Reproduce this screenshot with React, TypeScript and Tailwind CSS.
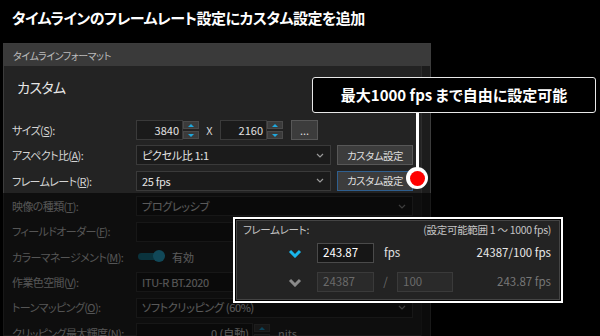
import React from "react";

const jp = "font-['Noto_Sans_CJK_JP','Noto_Sans',sans-serif] [font-feature-settings:'palt']";

const Chevron: React.FC<{ color?: string }> = ({ color = "#9a9a9a" }) => (
  <svg width="8" height="5" viewBox="0 0 8 5" fill="none">
    <polyline points="1,1 4,4 7,1" stroke={color} strokeWidth="1.2" />
  </svg>
);

const Spinner: React.FC = () => (
  <div className="flex flex-col gap-[2px] w-[16px]">
    <div className="h-[8px] bg-[#3b3b3b] border border-[#4a4a4a] flex items-center justify-center">
      <div className="w-0 h-0 border-l-[3px] border-r-[3px] border-b-[3px] border-l-transparent border-r-transparent border-b-[#1fa8dd]" />
    </div>
    <div className="h-[8px] bg-[#3b3b3b] border border-[#4a4a4a] flex items-center justify-center">
      <div className="w-0 h-0 border-l-[3px] border-r-[3px] border-t-[3px] border-l-transparent border-r-transparent border-t-[#1fa8dd]" />
    </div>
  </div>
);

const Label: React.FC<{ text: string; k: string }> = ({ text, k }) => (
  <div className="w-[124px] shrink-0 whitespace-nowrap text-[11px] tracking-[-0.6px] text-[#d4d4d4]">
    {text}(<span className="underline">{k}</span>):
  </div>
);

const Select: React.FC<{ value: string; w: string }> = ({ value, w }) => (
  <div className={`${w} h-[20px] bg-[#1b1b1b] border border-[#3a3a3a] flex items-center justify-between pl-[5px] pr-[6px] whitespace-nowrap text-[11px] tracking-[-0.3px] text-[#e2e2e2]`}>
    <span>{value}</span>
    <Chevron />
  </div>
);

const Button: React.FC<{ label: string; focused?: boolean }> = ({ label, focused }) => (
  <div
    className={`ml-[6px] w-[76px] h-[20px] flex items-center justify-center text-[10.5px] tracking-[-0.5px] text-[#dcdcdc] bg-[#3c3c3c] border ${
      focused ? "border-[#2f5f8f]" : "border-[#575757]"
    }`}
  >
    {label}
  </div>
);

const FrameChevron: React.FC<{ color: string }> = ({ color }) => (
  <svg width="14" height="9" viewBox="0 0 14 9" fill="none">
    <polyline points="2,2 7,7 12,2" stroke={color} strokeWidth="3" />
  </svg>
);

export default function App() {
  return (
    <div className={`relative w-[600px] h-[336px] overflow-hidden bg-black ${jp}`}>
      <div className="h-[43px] pl-[12px] pt-[7px] text-[15px] tracking-[-0.5px] font-bold text-white whitespace-nowrap">
        タイムラインのフレームレート設定にカスタム設定を追加
      </div>

      <div className="ml-[3px] w-[428px] h-[293px] border border-[#3c3c3c] bg-[#232323] flex flex-col">
        <div className="h-[22px] shrink-0 bg-[#3a3a3a] pl-[9px] flex items-center text-[10px] tracking-[-0.4px] text-[#bcbcbc]">
          タイムラインフォーマット
        </div>
        <div className="flex flex-1">
          <div className="flex-1 flex flex-col pl-[8px]">
            <div className="h-[30px] mt-[6px] pl-[5px] flex items-center text-[14px] tracking-[-0.6px] text-[#e6e6e6]">カスタム</div>
            <div className="flex flex-col gap-[5.4px] mt-[18px]">
              <div className="h-[20px] flex items-center">
                <Label text="サイズ" k="S" />
                <div className="w-[47px] h-[20px] bg-[#1b1b1b] border border-[#3a3a3a] flex items-center justify-end pr-[3px] text-[11px] text-[#e2e2e2]">3840</div>
                <Spinner />
                <span className="w-[21px] text-center text-[11px] text-[#d4d4d4]">X</span>
                <div className="w-[47px] h-[20px] bg-[#1b1b1b] border border-[#3a3a3a] flex items-center justify-end pr-[3px] text-[11px] text-[#e2e2e2]">2160</div>
                <Spinner />
                <div className="ml-[8px] w-[27px] h-[20px] bg-[#3c3c3c] border border-[#575757] flex items-center justify-center text-[11px] text-[#dcdcdc]">...</div>
              </div>
              <div className="h-[20px] flex items-center">
                <Label text="アスペクト比" k="A" />
                <Select value="ピクセル比 1:1" w="w-[195px]" />
                <Button label="カスタム設定" />
              </div>
              <div className="h-[20px] flex items-center">
                <Label text="フレームレート" k="R" />
                <Select value="25 fps" w="w-[195px]" />
                <Button label="カスタム設定" focused />
              </div>
              <div className="h-[20px] flex items-center">
                <Label text="映像の種類" k="T" />
                <Select value="プログレッシブ" w="w-[277px]" />
              </div>
              <div className="h-[20px] flex items-center">
                <Label text="フィールドオーダー" k="F" />
                <Select value="" w="w-[277px]" />
              </div>
              <div className="h-[20px] flex items-center">
                <Label text="カラーマネージメント" k="M" />
                <div className="relative w-[24px] h-[7px] ml-[2px] rounded-full bg-[#1a7f99]">
                  <div className="absolute right-[-3px] top-[-3px] w-[12px] h-[12px] rounded-full bg-[#2bb5dc]" />
                </div>
                <span className="ml-[10px] text-[11px] text-[#e2e2e2]">有効</span>
              </div>
              <div className="h-[20px] flex items-center">
                <Label text="作業色空間" k="V" />
                <Select value="ITU-R BT.2020" w="w-[277px]" />
              </div>
              <div className="h-[20px] flex items-center">
                <Label text="トーンマッピング" k="O" />
                <Select value="ソフトクリッピング (60%)" w="w-[277px]" />
              </div>
              <div className="h-[20px] flex items-center">
                <Label text="クリッピング最大輝度" k="N" />
                <div className="w-[117px] h-[20px] bg-[#1b1b1b] border border-[#3a3a3a] flex items-center justify-end pr-[3px] text-[11px] text-[#e2e2e2]">0 (自動)</div>
                <div className="ml-[1px]"><Spinner /></div>
                <span className="ml-[8px] text-[11px] text-[#d4d4d4]">nits</span>
              </div>
            </div>
          </div>
          <div className="w-[9px] bg-[#1c1c1c] border-l border-[#2c2c2c]" />
        </div>
      </div>

      {/* dim layer over the lower rows */}
      <div className="absolute left-0 top-[193px] w-[432px] bottom-0 bg-black/60" />

      {/* frame rate popup */}
      <div className="absolute left-[233px] top-[217px] w-[330px] h-[86px] border-2 border-white bg-[#232323] shadow-[inset_0_0_0_1px_#000,inset_0_0_0_2px_#444] flex flex-col">
        <div className="h-[22px] flex items-center justify-between pl-[8px] pr-[10px] text-[10.5px] tracking-[-0.3px] text-[#c4c4c4]">
          <span>フレームレート:</span>
          <span>(設定可能範囲 1 ～ 1000 fps)</span>
        </div>
        <div className="mt-[2px] h-[20px] flex items-center pl-[53px] pr-[10px]">
          <FrameChevron color="#19b5ea" />
          <div className="ml-[15px] w-[57px] h-[20px] bg-[#161616] border border-[#4a4a4a] flex items-center pl-[5px] text-[11.5px] text-white">243.87</div>
          <span className="ml-[10px] text-[11.5px] text-[#e2e2e2]">fps</span>
          <span className="flex-1 text-right text-[11.5px] text-[#e8e8e8]">24387/100 fps</span>
        </div>
        <div className="mt-[9px] h-[20px] flex items-center pl-[53px] pr-[10px]">
          <FrameChevron color="#8a8a8a" />
          <div className="ml-[15px] w-[57px] h-[20px] bg-[#2a2a2a] border border-[#3a3a3a] flex items-center pl-[5px] text-[11.5px] text-[#6a6a6a]">24387</div>
          <span className="w-[23px] text-center text-[11.5px] text-[#6a6a6a]">/</span>
          <div className="w-[56px] h-[20px] bg-[#2a2a2a] border border-[#3a3a3a] flex items-center pl-[5px] text-[11.5px] text-[#6a6a6a]">100</div>
          <span className="flex-1 text-right text-[11.5px] text-[#777]">243.87 fps</span>
        </div>
      </div>

      {/* callout */}
      <div className="absolute left-[312px] top-[77px] w-[284px] h-[36px] border-[1.5px] border-[#e8e8e8] rounded-[3px] bg-black flex items-center justify-center text-[15px] font-bold text-white whitespace-nowrap">
        最大1000 fps まで自由に設定可能
      </div>
      <div className="absolute left-[416px] top-[113px] w-[3px] h-[58px] bg-white" />
      <div className="absolute left-[406px] top-[167px] w-[22px] h-[22px] rounded-full bg-white flex items-center justify-center">
        <div className="w-[15px] h-[15px] rounded-full bg-[#ff0000]" />
      </div>
    </div>
  );
}
